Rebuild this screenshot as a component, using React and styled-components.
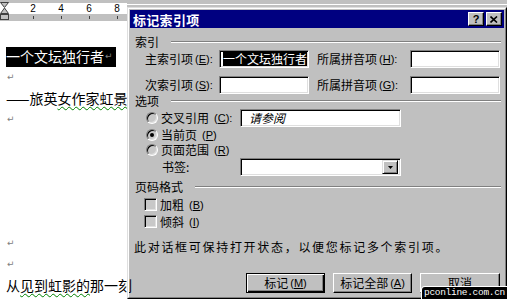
import React from 'react'
import styled, { createGlobalStyle } from 'styled-components'

const GlobalStyle = createGlobalStyle`
  html, body { margin: 0; padding: 0; background: #fff; }
  body { font-family: "Noto Sans CJK SC", "Liberation Sans", sans-serif; }
`

const Screen = styled.div`
  width: 507px;
  height: 299px;
  display: flex;
  position: relative;
  overflow: hidden;
  background: #c0c0c0;
`

// ---- document side ----
const DocPane = styled.div`
  width: 127px;
  flex: none;
  display: flex;
  flex-direction: column;
  background: #fff;
`
const Ruler = styled.div`
  height: 21px;
  flex: none;
  position: relative;
  display: flex;
  flex-direction: column;
  background: #c0c0c0;
  padding-top: 3px;
  box-sizing: border-box;
`
const NumberBand = styled.div`
  height: 11px;
  display: flex;
  padding-left: 19px;
  background: #fff;
  font-family: "Liberation Sans", sans-serif;
  font-size: 10px;
  line-height: 11px;
  color: #000;
`
const TickBand = styled.div`
  height: 7px;
  display: flex;
  padding-left: 19px;
  align-items: center;
`
const Cell = styled.div`
  width: 28px;
  flex: none;
  display: flex;
  justify-content: center;
`
const Tick = styled.div`
  width: 1px;
  height: 3px;
  background: #404040;
`
const IndentMarks = styled.svg`
  position: absolute;
  left: 0;
  top: 0;
`
const Page = styled.div`
  flex: 1;
  padding: 25px 0 0 6px;
  font-size: 14px;
  line-height: 21px;
  white-space: nowrap;
  color: #000;
`
const Line = styled.div`
  height: 21px;
  display: flex;
  align-items: center;
`
const Selected = styled.span`
  display: inline-flex;
  align-items: center;
  height: 20px;
  background: #000;
  color: #fff;
  padding-right: 3px;
`
const Mark = styled.span`
  font-family: "DejaVu Sans", sans-serif;
  font-size: 9px;
  color: #808080;
  margin-left: 1px;
`
const Squiggle = styled.span`
  text-decoration: underline wavy #008000;
  text-decoration-thickness: 1px;
  text-underline-offset: 2px;
`
const Gap = styled.div`
  height: ${p => p.h}px;
`

// ---- dialog side ----
const RightCol = styled.div`
  flex: 1;
  display: flex;
  flex-direction: column;
`
const TopStrip = styled.div`
  height: 7px;
  flex: none;
  background: linear-gradient(to bottom, #c0c0c0 4px, #fff 4px, #fff 5px, #c0c0c0 5px);
`
const Dialog = styled.div`
  flex: 1;
  display: flex;
  border: 1px solid;
  border-color: #dfdfdf #000 #000 #dfdfdf;
`
const DialogInner = styled.div`
  flex: 1;
  display: flex;
  flex-direction: column;
  border: 1px solid;
  border-color: #fff #808080 #808080 #fff;
  padding: 1px;
`
const TitleBar = styled.div`
  height: 18px;
  flex: none;
  display: flex;
  align-items: center;
  padding: 0 2px;
  background: #000080;
  color: #fff;
  font-size: 13px;
  font-weight: bold;
`
const Title = styled.div`
  flex: 1;
  padding-left: 1px;
  letter-spacing: 0.3px;
`
const CapButton = styled.div`
  width: 16px;
  height: 14px;
  box-sizing: border-box;
  margin-left: ${p => (p.gap ? 2 : 0)}px;
  display: flex;
  align-items: center;
  justify-content: center;
  background: #c0c0c0;
  border: 1px solid;
  border-color: #fff #000 #000 #fff;
  box-shadow: inset -1px -1px #808080;
  color: #000;
  font-family: "Liberation Sans", sans-serif;
  font-size: 11px;
  font-weight: bold;
`
const Body = styled.div`
  flex: 1;
  display: flex;
  flex-direction: column;
  padding: 7px 4px 0 4px;
  font-size: 12px;
  line-height: 14px;
  color: #000;
`
const GroupHeader = styled.div`
  height: 14px;
  display: flex;
  align-items: center;
  margin-top: ${p => p.mt || 0}px;
  padding-left: 1px;
`
const Rule = styled.div`
  flex: 1;
  margin-left: 12px;
  margin-right: -1px;
  border-top: 1px solid #808080;
  border-bottom: 1px solid #fff;
`
const FieldGrid = styled.div`
  display: grid;
  grid-template-columns: 74px 90px 101px 90px;
  grid-auto-rows: 18px;
  row-gap: 8px;
  align-items: center;
  padding-left: 11px;
  margin-top: 1px;
`
const Label = styled.div`
  display: flex;
  align-items: center;
  white-space: nowrap;
  padding-left: ${p => p.pl || 0}px;
`
const Key = styled.span`
  font-family: "Liberation Sans", sans-serif;
  font-size: 11px;
  margin-left: 2px;
`
const Field = styled.div`
  height: 18px;
  box-sizing: border-box;
  display: flex;
  align-items: center;
  background: #fff;
  border: 1px solid;
  border-color: #808080 #fff #fff #808080;
  box-shadow: inset 1px 1px #000, inset -1px -1px #dfdfdf;
  padding: 0 2px;
  overflow: hidden;
  white-space: nowrap;
`
const Highlight = styled.span`
  background: #000;
  color: #fff;
  border-left: 1px solid #fff;
  line-height: 14px;
`
const Hint = styled.span`
  font-style: italic;
  font-family: "Noto Sans CJK SC", sans-serif;
  padding-left: 6px;
`
const OptionGrid = styled.div`
  display: grid;
  grid-template-columns: 95px 161px;
  padding-left: 11px;
  margin-top: 1px;
`
const OptionRow = styled.div`
  grid-column: 1 / 3;
  display: flex;
  align-items: center;
  height: ${p => p.h}px;
  margin-top: ${p => p.mt || 0}px;
`
const OptionLead = styled.div`
  width: 95px;
  flex: none;
  display: flex;
  align-items: center;
  gap: 3px;
  padding-left: ${p => p.pl || 0}px;
  box-sizing: border-box;
`
const Radio = styled.span`
  width: 12px;
  height: 12px;
  flex: none;
  box-sizing: border-box;
  border-radius: 50%;
  border: 1px solid;
  border-color: #808080 #fff #fff #808080;
  box-shadow: inset 1px 1px #000, inset -1px -1px #dfdfdf;
  background: #c8c8c8;
  display: flex;
  align-items: center;
  justify-content: center;
  margin-left: 1px;
  &::after {
    content: '';
    width: 4px;
    height: 4px;
    border-radius: 50%;
    background: ${p => (p.on ? '#000' : 'transparent')};
  }
`
const Combo = styled(Field)`
  width: 161px;
  padding: 0 2px 0 0;
  justify-content: flex-end;
`
const DropButton = styled.div`
  width: 16px;
  height: 14px;
  box-sizing: border-box;
  display: flex;
  align-items: center;
  justify-content: center;
  background: #c0c0c0;
  border: 1px solid;
  border-color: #dfdfdf #000 #000 #dfdfdf;
  box-shadow: inset 1px 1px #fff, inset -1px -1px #808080;
`
const CheckRow = styled.div`
  height: 17px;
  display: flex;
  align-items: center;
  gap: 3px;
  padding-left: 10px;
  margin-top: ${p => p.mt || 0}px;
`
const Check = styled.span`
  width: 13px;
  height: 13px;
  flex: none;
  box-sizing: border-box;
  border: 1px solid;
  border-color: #808080 #fff #fff #808080;
  box-shadow: inset 1px 1px #000, inset -1px -1px #dfdfdf;
  background: #c8c8c8;
`
const Note = styled.div`
  height: 14px;
  margin-top: 10px;
  white-space: nowrap;
  letter-spacing: 1.7px;
`
const ButtonRow = styled.div`
  display: flex;
  justify-content: flex-end;
  gap: 8px;
  margin-top: 19px;
`
const Button = styled.div`
  width: ${p => p.w}px;
  height: 20px;
  box-sizing: border-box;
  display: flex;
  align-items: center;
  justify-content: center;
  background: #c0c0c0;
  border: 1px solid;
  border-color: ${p => (p.primary ? '#000' : '#fff #000 #000 #fff')};
  box-shadow: ${p => (p.primary
    ? 'inset 1px 1px #fff, inset -1px -1px #000, inset -2px -2px #808080'
    : 'inset -1px -1px #808080')};
  white-space: nowrap;
`
const Watermark = styled.div`
  position: absolute;
  right: 0;
  bottom: 0;
  width: 85px;
  height: 12px;
  background: #000;
  border-radius: 3px 0 0 0;
  box-shadow: 0 0 0 1px #fff;
  color: #fff;
  font-family: "Liberation Mono", monospace;
  font-size: 9.5px;
  line-height: 12px;
  text-align: center;
  letter-spacing: -0.3px;
  white-space: nowrap;
`

const K = ({ k, colon }) => (
  <Key>(<u>{k}</u>){colon ? ':' : ''}</Key>
)

export default function App() {
  return (
    <Screen>
      <GlobalStyle />
      <DocPane>
        <Ruler>
          <NumberBand>
            {['2', '4', '6', '8'].map(n => <Cell key={n}>{n}</Cell>)}
          </NumberBand>
          <TickBand>
            {[0, 1, 2, 3].map(i => <Cell key={i}><Tick /></Cell>)}
          </TickBand>
          <IndentMarks width="9" height="22" viewBox="0 0 9 22">
            <path d="M0.5 2.5 H8.5 L4.5 7.5 Z" fill="#c0c0c0" stroke="#404040" />
            <path d="M4.5 8 L8.5 13.5 H0.5 Z" fill="#c0c0c0" stroke="#404040" />
            <rect x="0.5" y="14.5" width="8" height="5" fill="#c0c0c0" stroke="#404040" />
          </IndentMarks>
        </Ruler>
        <Page>
          <Line><Selected>一个文坛独行者<Mark>↵</Mark></Selected></Line>
          <Line><Mark>↵</Mark></Line>
          <Line>——旅英<Squiggle>女作家虹景</Squiggle></Line>
          <Line><Mark>↵</Mark></Line>
          <Gap h={103} />
          <Line><Mark>↵</Mark></Line>
          <Line><Mark>↵</Mark></Line>
          <Line>从<Squiggle>见到虹影的</Squiggle>那一刻</Line>
        </Page>
      </DocPane>

      <RightCol>
        <TopStrip />
        <Dialog>
          <DialogInner>
            <TitleBar>
              <Title>标记索引项</Title>
              <CapButton>?</CapButton>
              <CapButton gap>
                <svg width="8" height="7" viewBox="0 0 8 7">
                  <path d="M0.5 0.5 L7 6.5 M7 0.5 L0.5 6.5" stroke="#000" strokeWidth="1.6" />
                </svg>
              </CapButton>
            </TitleBar>
            <Body>
              <GroupHeader>索引<Rule /></GroupHeader>
              <FieldGrid>
                <Label>主索引项<K k="E" colon /></Label>
                <Field><Highlight>一个文坛独行者</Highlight></Field>
                <Label pl={8}>所属拼音项<K k="H" colon /></Label>
                <Field />
                <Label>次索引项<K k="S" colon /></Label>
                <Field />
                <Label pl={8}>所属拼音项<K k="G" colon /></Label>
                <Field />
              </FieldGrid>

              <GroupHeader>选项<Rule /></GroupHeader>
              <OptionGrid>
                <OptionRow h={18}>
                  <OptionLead><Radio />交叉引用<K k="C" colon /></OptionLead>
                  <Field style={{ width: 161 }}><Hint>请参阅</Hint></Field>
                </OptionRow>
                <OptionRow h={15}>
                  <OptionLead><Radio on />当前页<K k="P" /></OptionLead>
                </OptionRow>
                <OptionRow h={15}>
                  <OptionLead><Radio />页面范围<K k="R" /></OptionLead>
                </OptionRow>
                <OptionRow h={18} mt={1}>
                  <OptionLead pl={17}>书签:</OptionLead>
                  <Combo>
                    <DropButton>
                      <svg width="5" height="3" viewBox="0 0 5 3">
                        <path d="M0 0 H5 L2.5 3 Z" fill="#000" />
                      </svg>
                    </DropButton>
                  </Combo>
                </OptionRow>
              </OptionGrid>

              <GroupHeader mt={4}>页码格式<Rule /></GroupHeader>
              <CheckRow mt={2}><Check />加粗<K k="B" /></CheckRow>
              <CheckRow><Check />倾斜<K k="I" /></CheckRow>

              <Note>此对话框可保持打开状态，以便您标记多个索引项。</Note>

              <ButtonRow>
                <Button w={79} primary>标记<K k="M" /></Button>
                <Button w={79}>标记全部<K k="A" /></Button>
                <Button w={80}>取消</Button>
              </ButtonRow>
            </Body>
          </DialogInner>
        </Dialog>
      </RightCol>
      <Watermark>pconline.com.cn</Watermark>
    </Screen>
  )
}
